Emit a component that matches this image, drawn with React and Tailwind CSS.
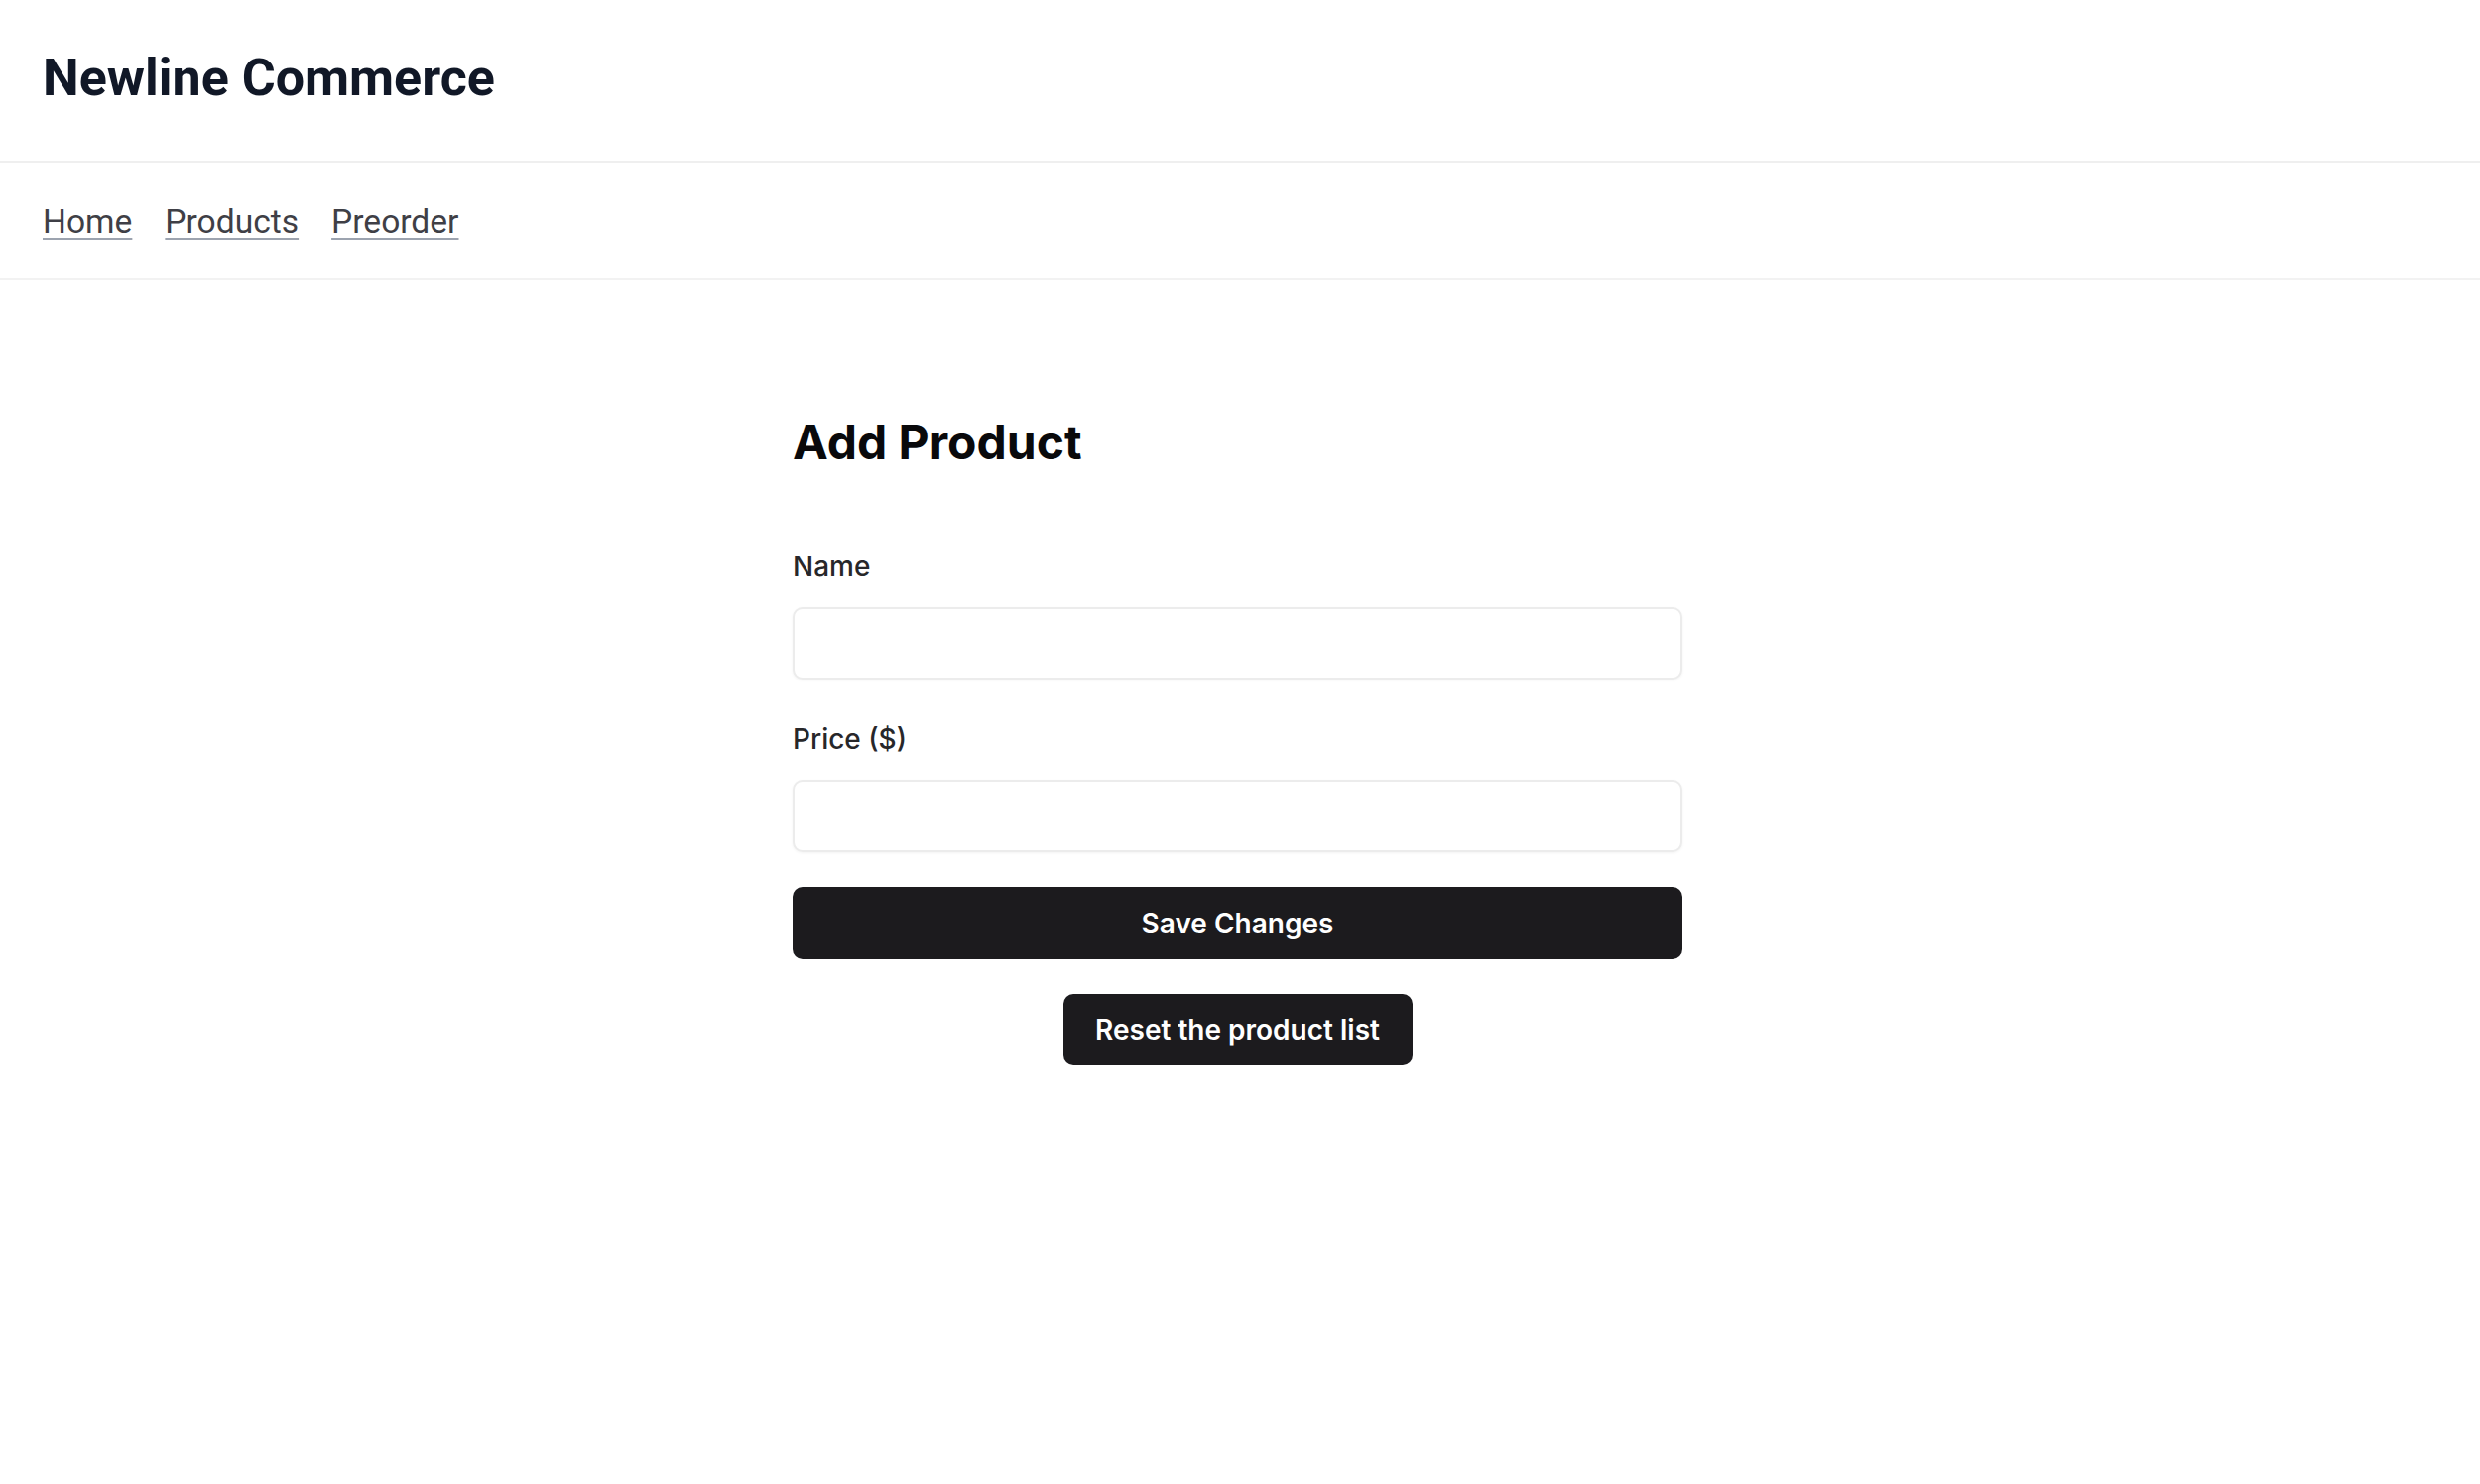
import React from "react";

const Field = ({ label, type = "text" }) => (
  <div className="flex flex-col">
    <label className="text-[28px] leading-[36px] font-medium text-[#27272a] mb-[23px]">{label}</label>
    <input
      type={type}
      className="h-[73px] w-full rounded-[10px] border-2 border-[#ececec] bg-white px-5 text-[28px] shadow-[0_1px_3px_rgba(0,0,0,0.05)] outline-none"
    />
  </div>
);

export default function App() {
  return (
    <div className="min-h-[1496px] bg-white" style={{ fontFamily: "Inter, 'Noto Sans', sans-serif" }}>
      <header className="h-[164px] border-b-2 border-[#efefef] px-[43px] pt-[49px]">
        <h1
          className="text-[52px] leading-[60px] font-bold text-[#111827]"
          style={{ fontFamily: "Roboto, 'Liberation Sans', sans-serif" }}
        >
          Newline Commerce
        </h1>
      </header>

      <nav
        className="flex h-[118px] items-center gap-[33px] border-b-2 border-[#f2f2f2] px-[43px] pt-[3px]"
        style={{ fontFamily: "Roboto, 'Liberation Sans', sans-serif" }}
      >
        {["Home", "Products", "Preorder"].map((item) => (
          <a
            key={item}
            href="#"
            className="text-[33.6px] leading-[40px] text-[#3f3f46] underline decoration-[#9ca3af] decoration-2 underline-offset-[5px]"
          >
            {item}
          </a>
        ))}
      </nav>

      <div className="flex justify-center pr-[5px]">
        <main className="w-[897px] pt-[135px]">
          <h2 className="text-[48px] leading-[58px] font-bold text-[#09090b] mb-[78px]">Add Product</h2>

          <div className="flex flex-col gap-[42px]">
            <Field label="Name" />
            <Field label="Price ($)" type="number" />
          </div>

          <button className="mt-[35px] h-[73px] w-full rounded-[10px] bg-[#1c1b1e] text-[28px] font-semibold text-white">
            Save Changes
          </button>

          <div className="mt-[35px] flex justify-center">
            <button className="h-[72px] w-[352px] rounded-[10px] bg-[#1c1b1e] text-[28px] font-semibold text-white">
              Reset the product list
            </button>
          </div>
        </main>
      </div>
    </div>
  );
}
